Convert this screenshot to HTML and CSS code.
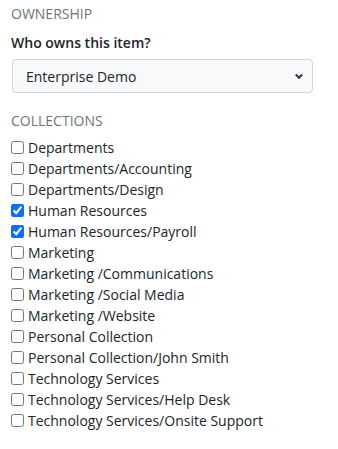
FILE: index.html
```html
<!DOCTYPE html>
<html>
<head>
<meta charset="utf-8">
<link rel="stylesheet" href="styles.css">
</head>
<body>
<div class="panel">
  <div class="section-title">OWNERSHIP</div>
  <label class="field-label" for="owner">Who owns this item?</label>
  <select id="owner" class="select">
    <option>Enterprise Demo</option>
  </select>
  <div class="section-title collections-title">COLLECTIONS</div>
  <ul class="checklist">
    <li><label><input type="checkbox"> Departments</label></li>
    <li><label><input type="checkbox"> Departments/Accounting</label></li>
    <li><label><input type="checkbox"> Departments/Design</label></li>
    <li><label><input type="checkbox" checked> Human Resources</label></li>
    <li><label><input type="checkbox" checked> Human Resources/Payroll</label></li>
    <li><label><input type="checkbox"> Marketing</label></li>
    <li><label><input type="checkbox"> Marketing /Communications</label></li>
    <li><label><input type="checkbox"> Marketing /Social Media</label></li>
    <li><label><input type="checkbox"> Marketing /Website</label></li>
    <li><label><input type="checkbox"> Personal Collection</label></li>
    <li><label><input type="checkbox"> Personal Collection/John Smith</label></li>
    <li><label><input type="checkbox"> Technology Services</label></li>
    <li><label><input type="checkbox"> Technology Services/Help Desk</label></li>
    <li><label><input type="checkbox"> Technology Services/Onsite Support</label></li>
  </ul>
</div>
</body>
</html>
```

FILE: styles.css
```css
html, body {
  margin: 0;
  padding: 0;
  background: #ffffff;
}
body {
  font-family: "Open Sans", "Liberation Sans", sans-serif;
  font-size: 14px;
  color: #212529;
}
.panel {
  padding: 4px 12px 0 11px;
  display: flex;
  flex-direction: column;
}
.section-title {
  font-size: 14px;
  color: #6c757d;
  line-height: 20px;
}
.field-label {
  font-weight: 600;
  font-size: 14px;
  line-height: 20px;
  margin-top: 9px;
  color: #212529;
}
.select {
  appearance: none;
  -webkit-appearance: none;
  margin: 6px 13px 0 1px;
  height: 34px;
  padding: 0 30px 0 13px;
  font-family: "Open Sans", "Liberation Sans", sans-serif;
  font-size: 14px;
  color: #212529;
  background-color: #f8f9fa;
  background-image: url("data:image/svg+xml,%3Csvg xmlns='http://www.w3.org/2000/svg' width='10' height='8' viewBox='0 0 10 8'%3E%3Cpath d='M1.8 2.5 L5 5.7 L8.2 2.5' fill='none' stroke='%23343a40' stroke-width='2.2'/%3E%3C/svg%3E");
  background-repeat: no-repeat;
  background-position: right 8px center;
  border: 1px solid #ced4da;
  border-radius: 4px;
}
.collections-title {
  margin-top: 18px;
}
.checklist {
  list-style: none;
  margin: 6px 0 0 0;
  padding: 0;
}
.checklist li {
  line-height: 21px;
  height: 21px;
}
.checklist label {
  display: flex;
  align-items: center;
  gap: 4px;
  color: #212529;
}
.checklist input {
  margin: 0;
  width: 13px;
  height: 13px;
  accent-color: #0d6efd;
}
```
